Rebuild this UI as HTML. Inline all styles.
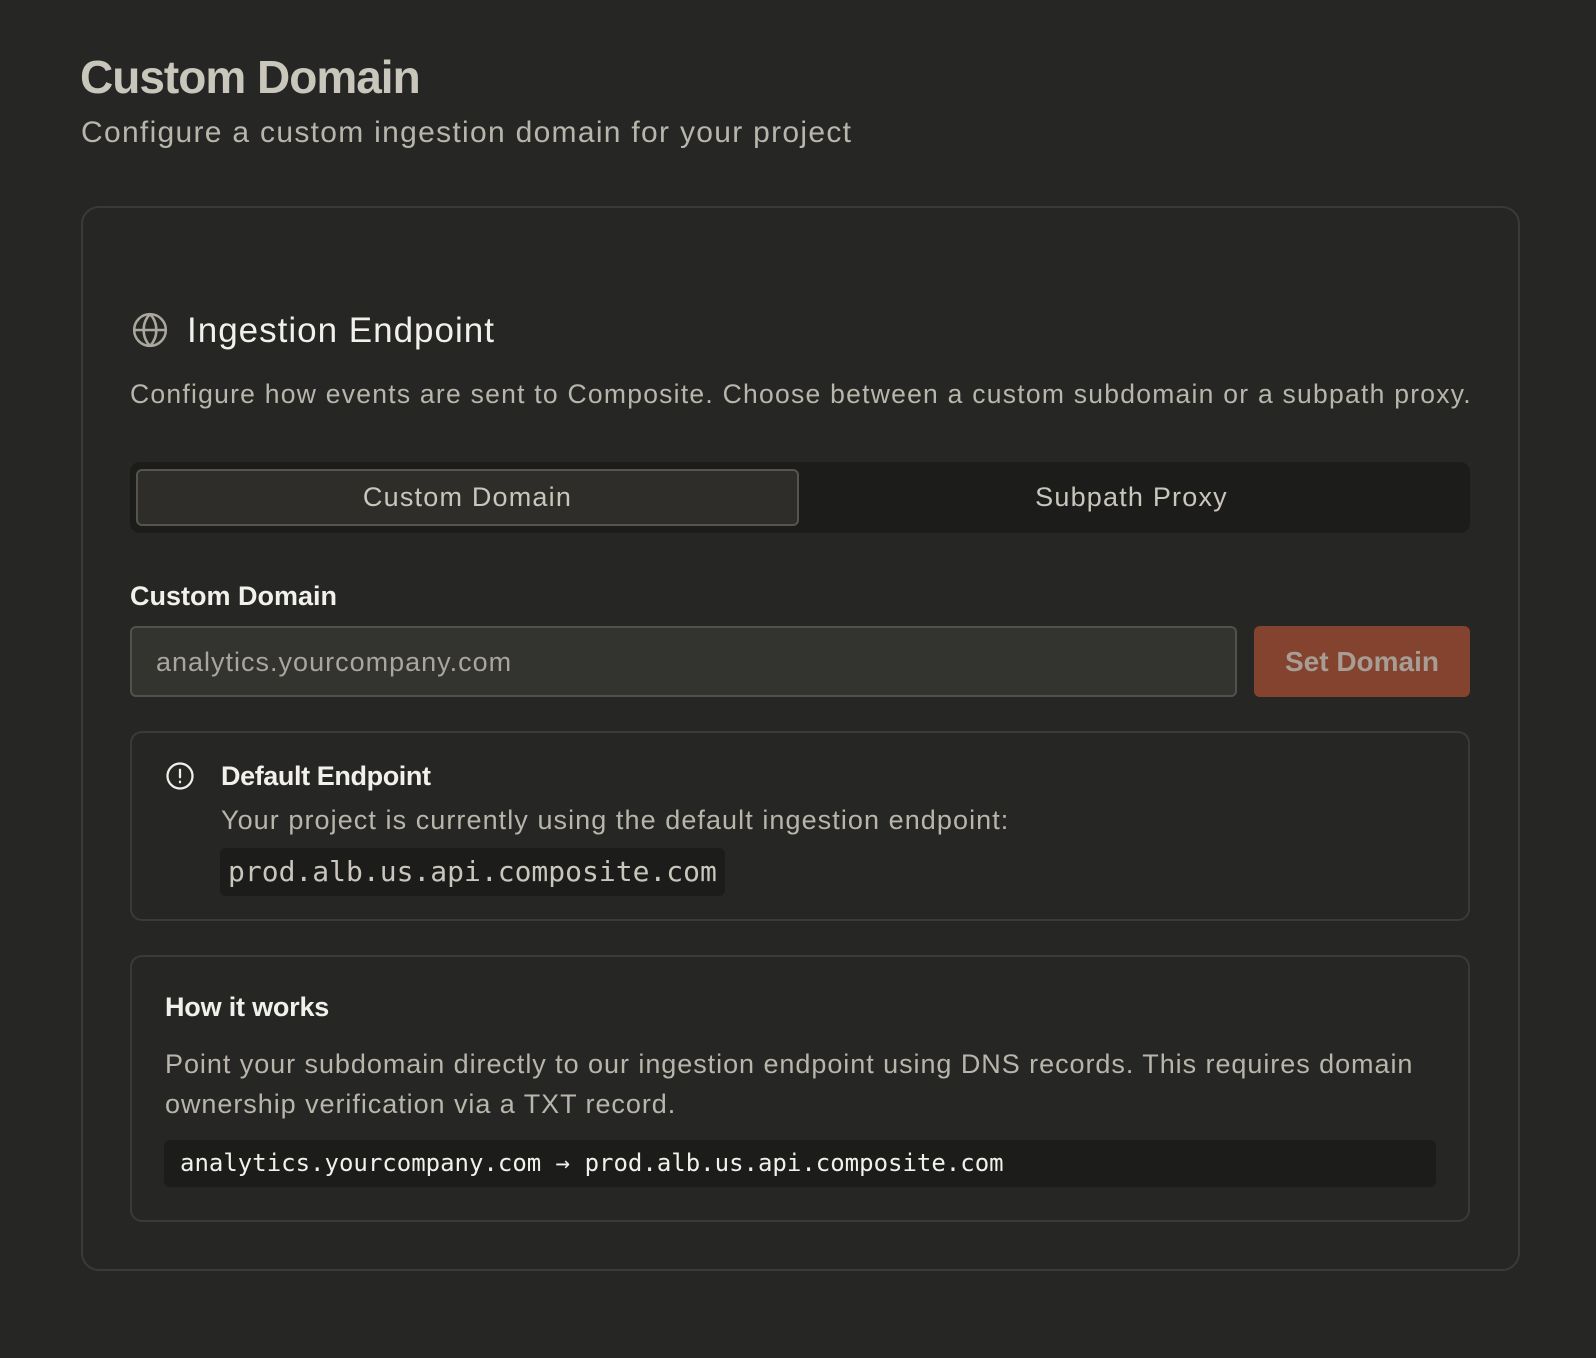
<!DOCTYPE html>
<html><head><meta charset="utf-8"><style>
*{box-sizing:border-box;margin:0;padding:0}
body{width:1596px;height:1358px;background:#262624;font-family:"Liberation Sans",sans-serif;position:relative;overflow:hidden;color:#b8b5ab}
.a{position:absolute;white-space:nowrap}
.mono{font-family:"DejaVu Sans Mono","Liberation Mono",monospace}
</style></head><body>
<div class="a" style="left:80px;top:50px;font-size:46px;font-weight:700;color:#c9c6bc;letter-spacing:-1px">Custom Domain</div>
<div class="a" style="left:81px;top:116px;font-size:30px;color:#b8b5ab;letter-spacing:1.3px">Configure a custom ingestion domain for your project</div>

<div class="a" style="left:81px;top:206px;width:1439px;height:1065px;border:2px solid #3a3a36;border-radius:18px"></div>

<svg class="a" style="left:131px;top:311px" width="38" height="38" viewBox="0 0 24 24" fill="none" stroke="#aaa79d" stroke-width="1.6"><circle cx="12" cy="12" r="10"/><path d="M2 12h20M12 2c3 3 4 6.5 4 10s-1 7-4 10M12 2c-3 3-4 6.5-4 10s1 7 4 10"/></svg>
<div class="a" style="left:187px;top:311px;font-size:35px;color:#f2f0ea;letter-spacing:1px">Ingestion Endpoint</div>
<div class="a" style="left:130px;top:379px;font-size:26.5px;color:#b8b5ab;letter-spacing:1.25px">Configure how events are sent to Composite. Choose between a custom subdomain or a subpath proxy.</div>

<div class="a" style="left:130px;top:462px;width:1340px;height:71px;background:#1c1c1a;border-radius:10px"></div>
<div class="a" style="left:136px;top:469px;width:663px;height:57px;background:#2e2d29;border:2px solid #55544e;border-radius:6px;text-align:center;line-height:53px;font-size:27px;color:#c9c6bc;letter-spacing:1.2px">Custom Domain</div>
<div class="a" style="left:799px;top:469px;width:665px;height:57px;text-align:center;line-height:57px;font-size:27px;color:#c9c6bc;letter-spacing:1.2px">Subpath Proxy</div>

<div class="a" style="left:130px;top:581px;font-size:27px;font-weight:700;color:#f2f0ea">Custom Domain</div>
<div class="a" style="left:130px;top:626px;width:1107px;height:71px;background:#33332f;border:2px solid #52524c;border-radius:6px;padding-left:24px;line-height:69px;font-size:27px;color:#a9a69d;letter-spacing:1px">analytics.yourcompany.com</div>
<div class="a" style="left:1254px;top:626px;width:216px;height:71px;background:#83432f;border-radius:6px;text-align:center;line-height:71px;font-size:28px;color:#a89d94;font-weight:700">Set Domain</div>

<div class="a" style="left:130px;top:731px;width:1340px;height:190px;border:2px solid #3a3a36;border-radius:12px"></div>
<svg class="a" style="left:165px;top:761px" width="30" height="30" viewBox="0 0 24 24" fill="none" stroke="#f2f0ea" stroke-width="1.8"><circle cx="12" cy="12" r="10"/><path d="M12 7v6M12 16.5v.5" stroke-linecap="round"/></svg>
<div class="a" style="left:221px;top:761px;font-size:27px;font-weight:700;color:#f2f0ea;letter-spacing:-0.4px">Default Endpoint</div>
<div class="a" style="left:221px;top:805px;font-size:27px;color:#b8b5ab;letter-spacing:1.07px">Your project is currently using the default ingestion endpoint:</div>
<div class="a mono" style="left:220px;top:848px;width:505px;height:48px;background:#1c1c1a;border-radius:6px;padding-left:8px;line-height:48px;font-size:28px;color:#c9c6bc">prod.alb.us.api.composite.com</div>

<div class="a" style="left:130px;top:955px;width:1340px;height:267px;border:2px solid #3a3a36;border-radius:12px"></div>
<div class="a" style="left:165px;top:992px;font-size:27px;font-weight:700;color:#f2f0ea;letter-spacing:-0.2px">How it works</div>
<div class="a" style="left:165px;top:1044px;font-size:27px;color:#b8b5ab;line-height:40px;letter-spacing:0.95px">Point your subdomain directly to our ingestion endpoint using DNS records. This requires domain<br>ownership verification via a TXT record.</div>
<div class="a mono" style="left:164px;top:1140px;width:1272px;height:47px;background:#1c1c1a;border-radius:6px;padding-left:16px;line-height:47px;font-size:24px;color:#f2f0ea">analytics.yourcompany.com → prod.alb.us.api.composite.com</div>
</body></html>
